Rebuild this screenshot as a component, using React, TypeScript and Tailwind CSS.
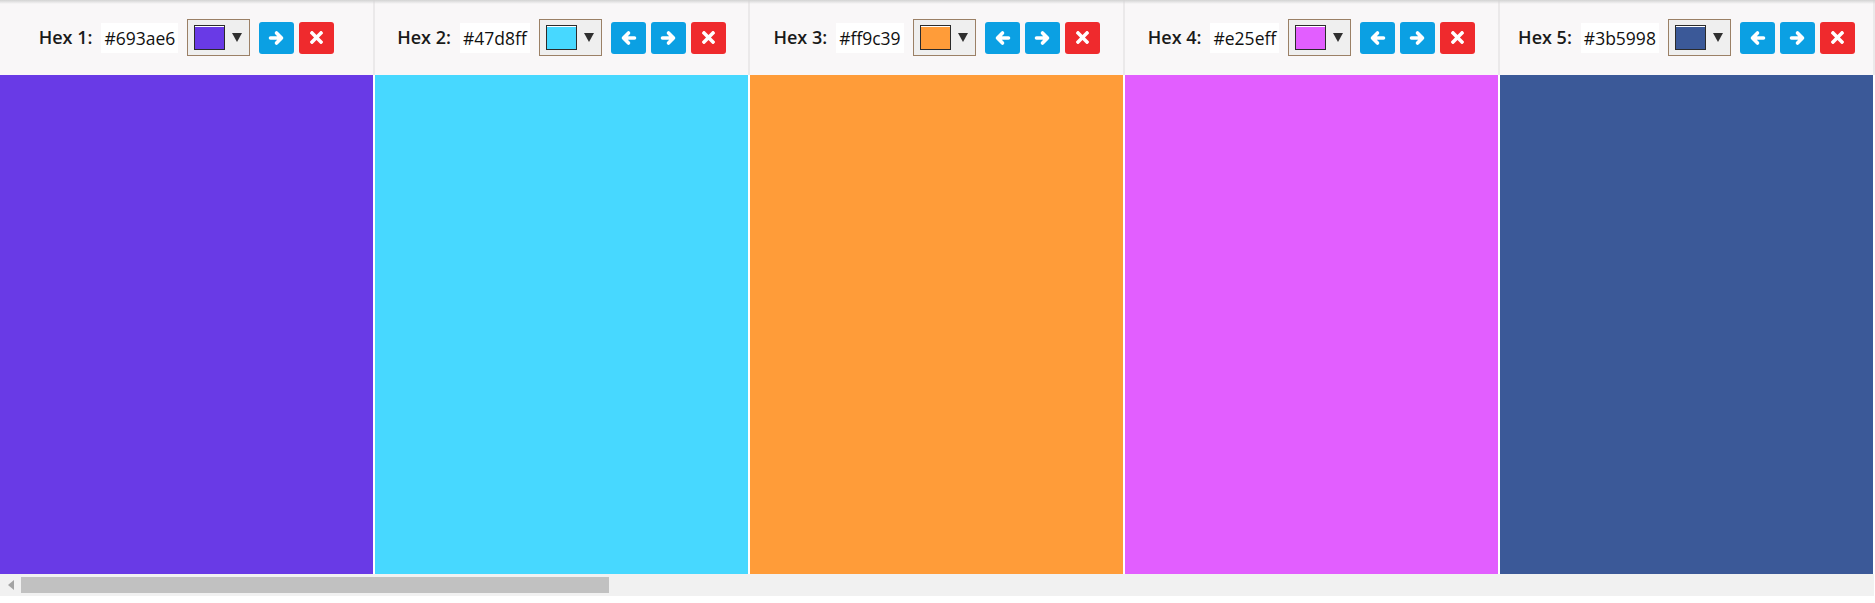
import { FaTimes } from "react-icons/fa";

const swatches = [
  { hex: "#693ae6", bg: "bg-[#693ae6]" },
  { hex: "#47d8ff", bg: "bg-[#47d8ff]" },
  { hex: "#ff9c39", bg: "bg-[#ff9c39]" },
  { hex: "#e25eff", bg: "bg-[#e25eff]" },
  { hex: "#3b5998", bg: "bg-[#3b5998]" },
];

const Arrow = ({ flip }: { flip?: boolean }) => (
  <svg width="17" height="16" viewBox="0 0 17 16" className={flip ? "-scale-x-100" : ""}>
    <path
      d="M2.5 8H13.5M8.5 3L13.5 8L8.5 13"
      fill="none"
      stroke="currentColor"
      strokeWidth="3.6"
      strokeLinecap="round"
      strokeLinejoin="round"
    />
  </svg>
);

const ColorPicker = ({ bg }: { bg: string }) => (
  <div className="ml-[9px] flex h-[37px] w-[63px] items-center border border-[#9b8066] bg-[#efefef] pl-[6px]">
    <div className={`h-[25px] w-[31px] border border-[#2b2b2b] shadow-[inset_0_1px_0_#ffffff] ${bg}`} />
    <svg className="ml-[7px]" width="10" height="9" viewBox="0 0 10 9">
      <polygon points="0,0 10,0 5,9" fill="#2f2f2f" />
    </svg>
  </div>
);

const ActionButton = ({ kind }: { kind: "left" | "right" | "remove" }) => (
  <button
    className={`flex h-[32px] w-[35px] items-center justify-center rounded-[3px] text-white ${
      kind === "remove" ? "bg-[#ef2a2d]" : "bg-[#0ba0e3]"
    }`}
  >
    {kind === "left" && <Arrow flip />}
    {kind === "right" && <Arrow />}
    {kind === "remove" && <FaTimes size={19} />}
  </button>
);

const Column = ({ index, hex, bg }: { index: number; hex: string; bg: string }) => (
  <div className="flex w-[375px] shrink-0 flex-col">
    <div className="flex h-[75px] items-center justify-center border-r-2 border-[#ebe9ea] bg-[#f9f7f8]">
      <span className="text-[18px] font-semibold text-[#1a1a1a]">Hex {index + 1}:</span>
      <span className="ml-[9px] h-[30px] bg-white px-[3px] text-[17.5px] leading-[30px] text-[#111]">{hex}</span>
      <ColorPicker bg={bg} />
      <div className="ml-[9px] flex gap-[5px]">
        {index > 0 && <ActionButton kind="left" />}
        <ActionButton kind="right" />
        <ActionButton kind="remove" />
      </div>
    </div>
    <div className={`h-[499px] border-r-2 border-white ${bg}`} />
  </div>
);

export default function App() {
  return (
    <div className="relative h-[603px] w-[1875px] overflow-hidden bg-white font-['Open_Sans',sans-serif]">
      <div className="absolute inset-x-0 top-0 h-[4px] bg-gradient-to-b from-[#d3d3d3] to-transparent" />
      <div className="flex">
        {swatches.map((s, i) => (
          <Column key={s.hex} index={i} hex={s.hex} bg={s.bg} />
        ))}
      </div>
      {/* scrollbar */}
      <div className="flex h-[22px] w-[1874px] items-center bg-[#f1f1f1]">
        <svg className="ml-[8px]" width="6" height="10" viewBox="0 0 6 10">
          <polygon points="6,0 6,10 0,5" fill="#a3a3a3" />
        </svg>
        <div className="ml-[7px] h-[16px] w-[588px] bg-[#c1c1c1]" />
      </div>
    </div>
  );
}
